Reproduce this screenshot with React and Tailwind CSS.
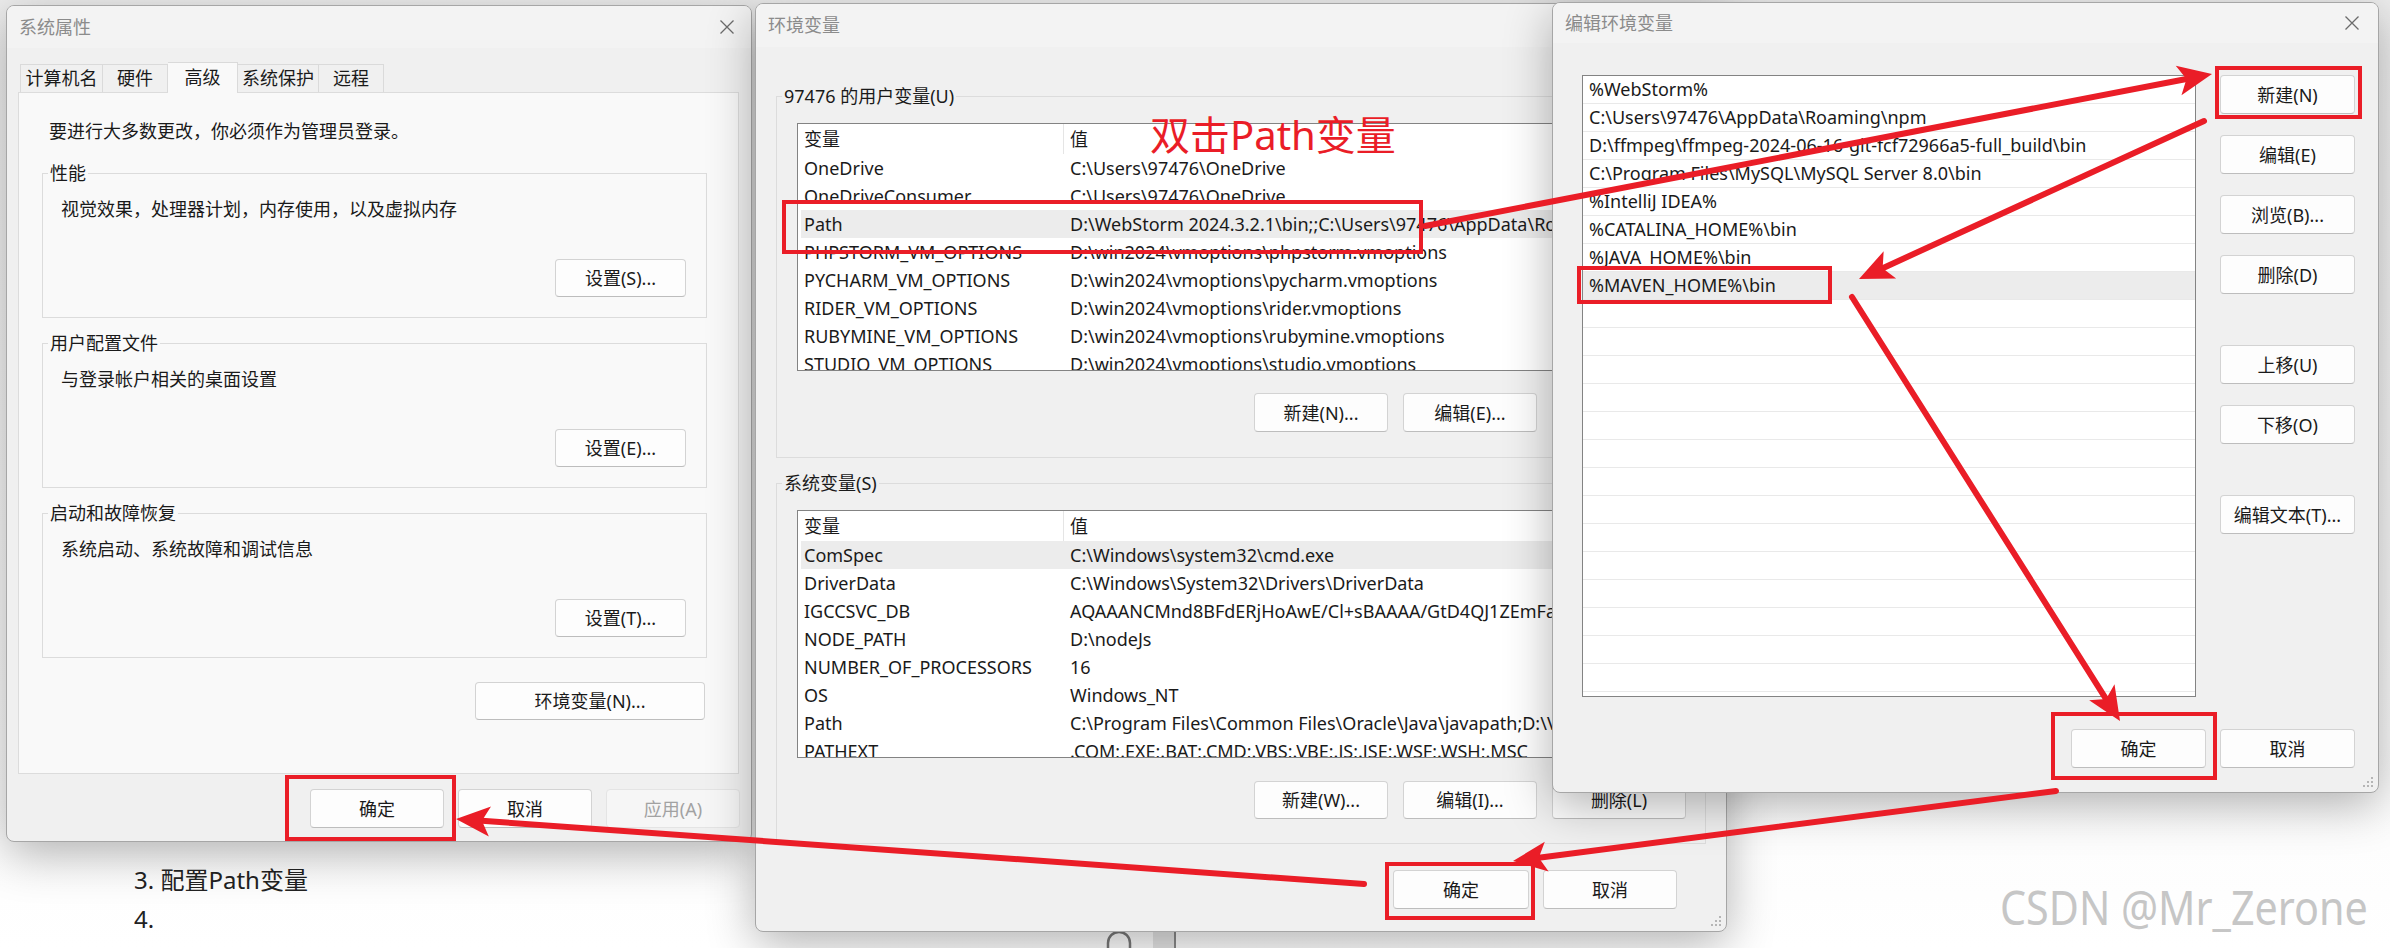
import React from 'react';

const RED = '#ea1d27';

const Btn = ({ children, className = '', disabled }) => (
    <div
        className={`flex items-center justify-center rounded-[4px] border text-[18px] leading-none ${disabled
            ? 'bg-[#f6f6f6] border-[#e4e4e4] text-[#a2a2a2]'
            : 'bg-[#fdfdfd] border-[#d3d3d3] border-b-[#bdbdbd] text-[#1a1a1a]'
            } ${className}`}
    >
        {children}
    </div>
);

const CloseX = () => (
    <svg width="16" height="16" viewBox="0 0 16 16">
        <path d="M1.5 1.5 L14.5 14.5 M14.5 1.5 L1.5 14.5" stroke="#6b6b6b" strokeWidth="1.3" fill="none" />
    </svg>
);

const Grip = () => (
    <svg width="12" height="12" viewBox="0 0 12 12" className="absolute right-[4px] bottom-[4px]">
        {[[9, 1], [9, 5], [5, 5], [9, 9], [5, 9], [1, 9]].map(([x, y]) => (
            <rect key={`${x}-${y}`} x={x} y={y} width="2" height="2" fill="#b5b5b5" />
        ))}
    </svg>
);

const TitleBar = ({ title, close, h, pr }) => (
    <div className={`flex items-center justify-between bg-[#f3f3f3] pl-[12px] ${h} ${pr}`}>
        <span className="text-[18px] text-[#8b8b8b]">{title}</span>
        {close && <CloseX />}
    </div>
);

// group box with caption sitting on the top border
const Group = ({ label, className = '', labelBg, children }) => (
    <div className={`relative flex flex-col border border-[#dcdcdc] ${className}`}>
        <span className={`absolute left-[5px] top-[-15px] px-[2px] text-[18px] leading-[28px] text-[#1a1a1a] ${labelBg}`}>
            {label}
        </span>
        {children}
    </div>
);

const userVars = [
    ['OneDrive', 'C:\\Users\\97476\\OneDrive'],
    ['OneDriveConsumer', 'C:\\Users\\97476\\OneDrive'],
    ['Path', 'D:\\WebStorm 2024.3.2.1\\bin;;C:\\Users\\97476\\AppData\\Roaming\\npm;D:\\ffmpeg\\bin'],
    ['PHPSTORM_VM_OPTIONS', 'D:\\win2024\\vmoptions\\phpstorm.vmoptions'],
    ['PYCHARM_VM_OPTIONS', 'D:\\win2024\\vmoptions\\pycharm.vmoptions'],
    ['RIDER_VM_OPTIONS', 'D:\\win2024\\vmoptions\\rider.vmoptions'],
    ['RUBYMINE_VM_OPTIONS', 'D:\\win2024\\vmoptions\\rubymine.vmoptions'],
    ['STUDIO_VM_OPTIONS', 'D:\\win2024\\vmoptions\\studio.vmoptions'],
];

const sysVars = [
    ['ComSpec', 'C:\\Windows\\system32\\cmd.exe'],
    ['DriverData', 'C:\\Windows\\System32\\Drivers\\DriverData'],
    ['IGCCSVC_DB', 'AQAAANCMnd8BFdERjHoAwE/Cl+sBAAAA/GtD4QJ1ZEmFaKcDJyBIAAAAAAIAAAAAABBmAAAA'],
    ['NODE_PATH', 'D:\\nodeJs'],
    ['NUMBER_OF_PROCESSORS', '16'],
    ['OS', 'Windows_NT'],
    ['Path', 'C:\\Program Files\\Common Files\\Oracle\\Java\\javapath;D:\\VMware\\bin'],
    ['PATHEXT', '.COM;.EXE;.BAT;.CMD;.VBS;.VBE;.JS;.JSE;.WSF;.WSH;.MSC'],
];

const pathItems = [
    '%WebStorm%',
    'C:\\Users\\97476\\AppData\\Roaming\\npm',
    'D:\\ffmpeg\\ffmpeg-2024-06-16-git-fcf72966a5-full_build\\bin',
    'C:\\Program Files\\MySQL\\MySQL Server 8.0\\bin',
    '%IntelliJ IDEA%',
    '%CATALINA_HOME%\\bin',
    '%JAVA_HOME%\\bin',
    '%MAVEN_HOME%\\bin',
];

const VarList = ({ rows, selected }) => (
    <div className="ml-[20px] mt-[26px] h-[248px] w-[888px] shrink-0 overflow-hidden border border-[#838383] bg-white text-[18px] text-[#1a1a1a]">
        <div className="flex h-[30px] items-center">
            <div className="h-full w-[266px] shrink-0 border-r border-[#e5e5e5] pl-[6px] leading-[30px]">变量</div>
            <div className="pl-[6px]">值</div>
        </div>
        {rows.map(([k, v], i) => (
            <div
                key={k}
                className={`ml-[3px] flex h-[28px] items-center whitespace-nowrap ${i === selected ? 'bg-[#ececec]' : ''}`}
            >
                <div className="w-[263px] shrink-0 pl-[3px]">{k}</div>
                <div className="shrink-0 pl-[6px]">{v}</div>
            </div>
        ))}
    </div>
);

const Arrow = ({ x1, y1, x2, y2 }) => {
    const a = Math.atan2(y2 - y1, x2 - x1);
    const L = 34;
    const W = 15;
    const bx = x2 - L * Math.cos(a);
    const by = y2 - L * Math.sin(a);
    const nx = x2 - (L - 8) * Math.cos(a);
    const ny = y2 - (L - 8) * Math.sin(a);
    const px = -Math.sin(a) * W;
    const py = Math.cos(a) * W;
    return (
        <g>
            <line x1={x1} y1={y1} x2={nx} y2={ny} stroke={RED} strokeWidth="6" strokeLinecap="round" />
            <polygon
                points={`${x2},${y2} ${bx + px},${by + py} ${nx},${ny} ${bx - px},${by - py}`}
                fill={RED}
            />
        </g>
    );
};

const Box = ({ x, y, w, h }) => (
    <rect x={x} y={y} width={w} height={h} fill="none" stroke={RED} strokeWidth="4" />
);

export default function App() {
    return (
        <div className="relative h-[948px] w-[2390px] overflow-hidden bg-white font-['Noto_Sans','Noto_Sans_CJK_SC',sans-serif] text-[#1a1a1a]">
            {/* page behind the windows */}
            <div className="absolute inset-0 flex flex-col bg-gradient-to-b from-[#eeeeee] via-[#f6f6f6] to-white pl-[134px] pt-[860px] text-[24px] leading-[39px] text-[#222]">
                <div>3. 配置Path变量</div>
                <div>4.</div>
            </div>
            <div className="absolute left-[1153px] top-[930px] h-[18px] w-[23px] border-r-2 border-[#8a8a8a] bg-[#e6e6e6]" />
            <svg className="absolute left-[1104px] top-[932px]" width="30" height="16" viewBox="0 0 30 16">
                <path d="M4 16 V11 A11 11 0 0 1 26 11 V16" stroke="#7a7a7a" strokeWidth="2.5" fill="none" />
            </svg>

            {/* 系统属性 */}
            <div className="absolute left-[6px] top-[5px] flex h-[837px] w-[746px] flex-col overflow-hidden rounded-[8px] border border-[#a6a6a6] bg-[#f0f0f0] shadow-[0_12px_48px_rgba(0,0,0,0.3)]">
                <TitleBar title="系统属性" close h="h-[42px]" pr="pr-[16px]" />
                <div className="pl-[11px] pt-[14px]">
                    <div className="flex h-[30px] items-end pl-[2px] text-[18px]">
                        <div className="flex h-[28px] w-[83px] items-center justify-center border border-b-0 border-[#dadada]">计算机名</div>
                        <div className="flex h-[28px] w-[65px] items-center justify-center border border-b-0 border-l-0 border-[#dadada]">硬件</div>
                        <div className="relative z-10 mb-[-1px] flex h-[31px] w-[70px] items-start justify-center border border-b-0 border-l-0 border-[#dadada] bg-[#f9f9f9] pt-[1px]">高级</div>
                        <div className="flex h-[28px] w-[81px] items-center justify-center border border-b-0 border-l-0 border-[#dadada]">系统保护</div>
                        <div className="flex h-[28px] w-[65px] items-center justify-center border border-b-0 border-l-0 border-[#dadada]">远程</div>
                    </div>
                    <div className="flex h-[682px] w-[721px] flex-col border border-[#dcdcdc] bg-[#f9f9f9] text-[18px]">
                        <div className="pl-[30px] pt-[24px] leading-[28px]">要进行大多数更改，你必须作为管理员登录。</div>
                        <Group label="性能" labelBg="bg-[#f9f9f9]" className="ml-[23px] mt-[28px] h-[145px] w-[665px]">
                            <div className="pl-[18px] pt-[21px] leading-[28px]">视觉效果，处理器计划，内存使用，以及虚拟内存</div>
                            <Btn className="mb-[20px] mr-[20px] mt-auto h-[38px] w-[131px] self-end">设置(S)...</Btn>
                        </Group>
                        <Group label="用户配置文件" labelBg="bg-[#f9f9f9]" className="ml-[23px] mt-[25px] h-[145px] w-[665px]">
                            <div className="pl-[18px] pt-[21px] leading-[28px]">与登录帐户相关的桌面设置</div>
                            <Btn className="mb-[20px] mr-[20px] mt-auto h-[38px] w-[131px] self-end">设置(E)...</Btn>
                        </Group>
                        <Group label="启动和故障恢复" labelBg="bg-[#f9f9f9]" className="ml-[23px] mt-[25px] h-[145px] w-[665px]">
                            <div className="pl-[18px] pt-[21px] leading-[28px]">系统启动、系统故障和调试信息</div>
                            <Btn className="mb-[20px] mr-[20px] mt-auto h-[38px] w-[131px] self-end">设置(T)...</Btn>
                        </Group>
                        <Btn className="ml-[456px] mt-[24px] h-[38px] w-[230px]">环境变量(N)...</Btn>
                    </div>
                </div>
                <div className="flex justify-end gap-[14px] pr-[11px] pt-[15px]">
                    <Btn className="h-[39px] w-[134px]">确定</Btn>
                    <Btn className="h-[39px] w-[134px]">取消</Btn>
                    <Btn disabled className="h-[39px] w-[134px]">应用(A)</Btn>
                </div>
            </div>

            {/* 环境变量 */}
            <div className="absolute left-[755px] top-[3px] flex h-[929px] w-[972px] flex-col overflow-hidden rounded-[8px] border border-[#a6a6a6] bg-[#f0f0f0] shadow-[0_12px_48px_rgba(0,0,0,0.3)]">
                <TitleBar title="环境变量" h="h-[43px]" pr="pr-[16px]" />
                <div className="flex flex-col pl-[20px]">
                    <Group label="97476 的用户变量(U)" labelBg="bg-[#f0f0f0]" className="mt-[49px] h-[362px] w-[930px]">
                        <VarList rows={userVars} selected={2} />
                        <div className="flex justify-end gap-[15px] pr-[19px] pt-[22px]">
                            <Btn className="h-[39px] w-[134px]">新建(N)...</Btn>
                            <Btn className="h-[39px] w-[134px]">编辑(E)...</Btn>
                            <Btn className="h-[39px] w-[134px]">删除(D)</Btn>
                        </div>
                    </Group>
                    <Group label="系统变量(S)" labelBg="bg-[#f0f0f0]" className="mt-[25px] h-[361px] w-[930px]">
                        <VarList rows={sysVars} selected={0} />
                        <div className="flex justify-end gap-[15px] pr-[19px] pt-[23px]">
                            <Btn className="h-[38px] w-[134px]">新建(W)...</Btn>
                            <Btn className="h-[38px] w-[134px]">编辑(I)...</Btn>
                            <Btn className="h-[38px] w-[134px]">删除(L)</Btn>
                        </div>
                    </Group>
                </div>
                <div className="flex justify-end gap-[14px] pr-[49px] pt-[26px]">
                    <Btn className="h-[39px] w-[136px]">确定</Btn>
                    <Btn className="h-[39px] w-[134px]">取消</Btn>
                </div>
                <Grip />
            </div>

            {/* 编辑环境变量 */}
            <div className="absolute left-[1552px] top-[2px] flex h-[791px] w-[827px] flex-col overflow-hidden rounded-[8px] border border-[#a6a6a6] bg-[#f0f0f0] shadow-[0_12px_48px_rgba(0,0,0,0.3)]">
                <TitleBar title="编辑环境变量" close h="h-[40px]" pr="pr-[18px]" />
                <div className="flex pl-[29px] pt-[32px]">
                    <div className="h-[622px] w-[614px] overflow-hidden border border-[#838383] bg-white text-[18px]">
                        {Array.from({ length: 23 }).map((_, i) => (
                            <div
                                key={i}
                                className={`flex h-[28px] items-center whitespace-nowrap border-b border-[#e9e9e9] pl-[6px] ${i === 7 ? 'bg-[#ececec]' : ''}`}
                            >
                                {pathItems[i] || ''}
                            </div>
                        ))}
                    </div>
                    <div className="ml-[24px] flex flex-col">
                        <Btn className="h-[39px] w-[135px]">新建(N)</Btn>
                        <Btn className="mt-[21px] h-[39px] w-[135px]">编辑(E)</Btn>
                        <Btn className="mt-[21px] h-[39px] w-[135px]">浏览(B)...</Btn>
                        <Btn className="mt-[21px] h-[39px] w-[135px]">删除(D)</Btn>
                        <Btn className="mt-[51px] h-[39px] w-[135px]">上移(U)</Btn>
                        <Btn className="mt-[21px] h-[39px] w-[135px]">下移(O)</Btn>
                        <Btn className="mt-[51px] h-[39px] w-[135px]">编辑文本(T)...</Btn>
                    </div>
                </div>
                <div className="flex justify-end gap-[14px] pr-[23px] pt-[32px]">
                    <Btn className="h-[39px] w-[135px]">确定</Btn>
                    <Btn className="h-[39px] w-[135px]">取消</Btn>
                </div>
                <Grip />
            </div>

            {/* annotations */}
            <div className="absolute left-[1150px] top-[108px] whitespace-nowrap text-[40px] leading-[54px] text-[#ea1d27]">双击Path变量</div>
            <div className="absolute left-[2000px] top-[878px] origin-left scale-x-[0.86] whitespace-nowrap text-[48px] leading-[58px] text-[#c6c6c6]">CSDN @Mr_Zerone</div>
            <svg className="pointer-events-none absolute inset-0" width="2390" height="948" viewBox="0 0 2390 948">
                <Box x={784} y={202} w={637} h={50} />
                <Box x={2217} y={68} w={143} h={49} />
                <Box x={1579} y={268} w={251} h={34} />
                <Box x={2053} y={714} w={162} h={64} />
                <Box x={1387} y={864} w={146} h={54} />
                <Box x={287} y={777} w={167} h={62} />
                <Arrow x1={1425} y1={226} x2={2212} y2={74} />
                <Arrow x1={2204} y1={121} x2={1859} y2={279} />
                <Arrow x1={1852} y1={297} x2={2120} y2={721} />
                <Arrow x1={2056} y1={791} x2={1513} y2={861} />
                <Arrow x1={1364} y1={884} x2={456} y2={819} />
            </svg>
        </div>
    );
}
